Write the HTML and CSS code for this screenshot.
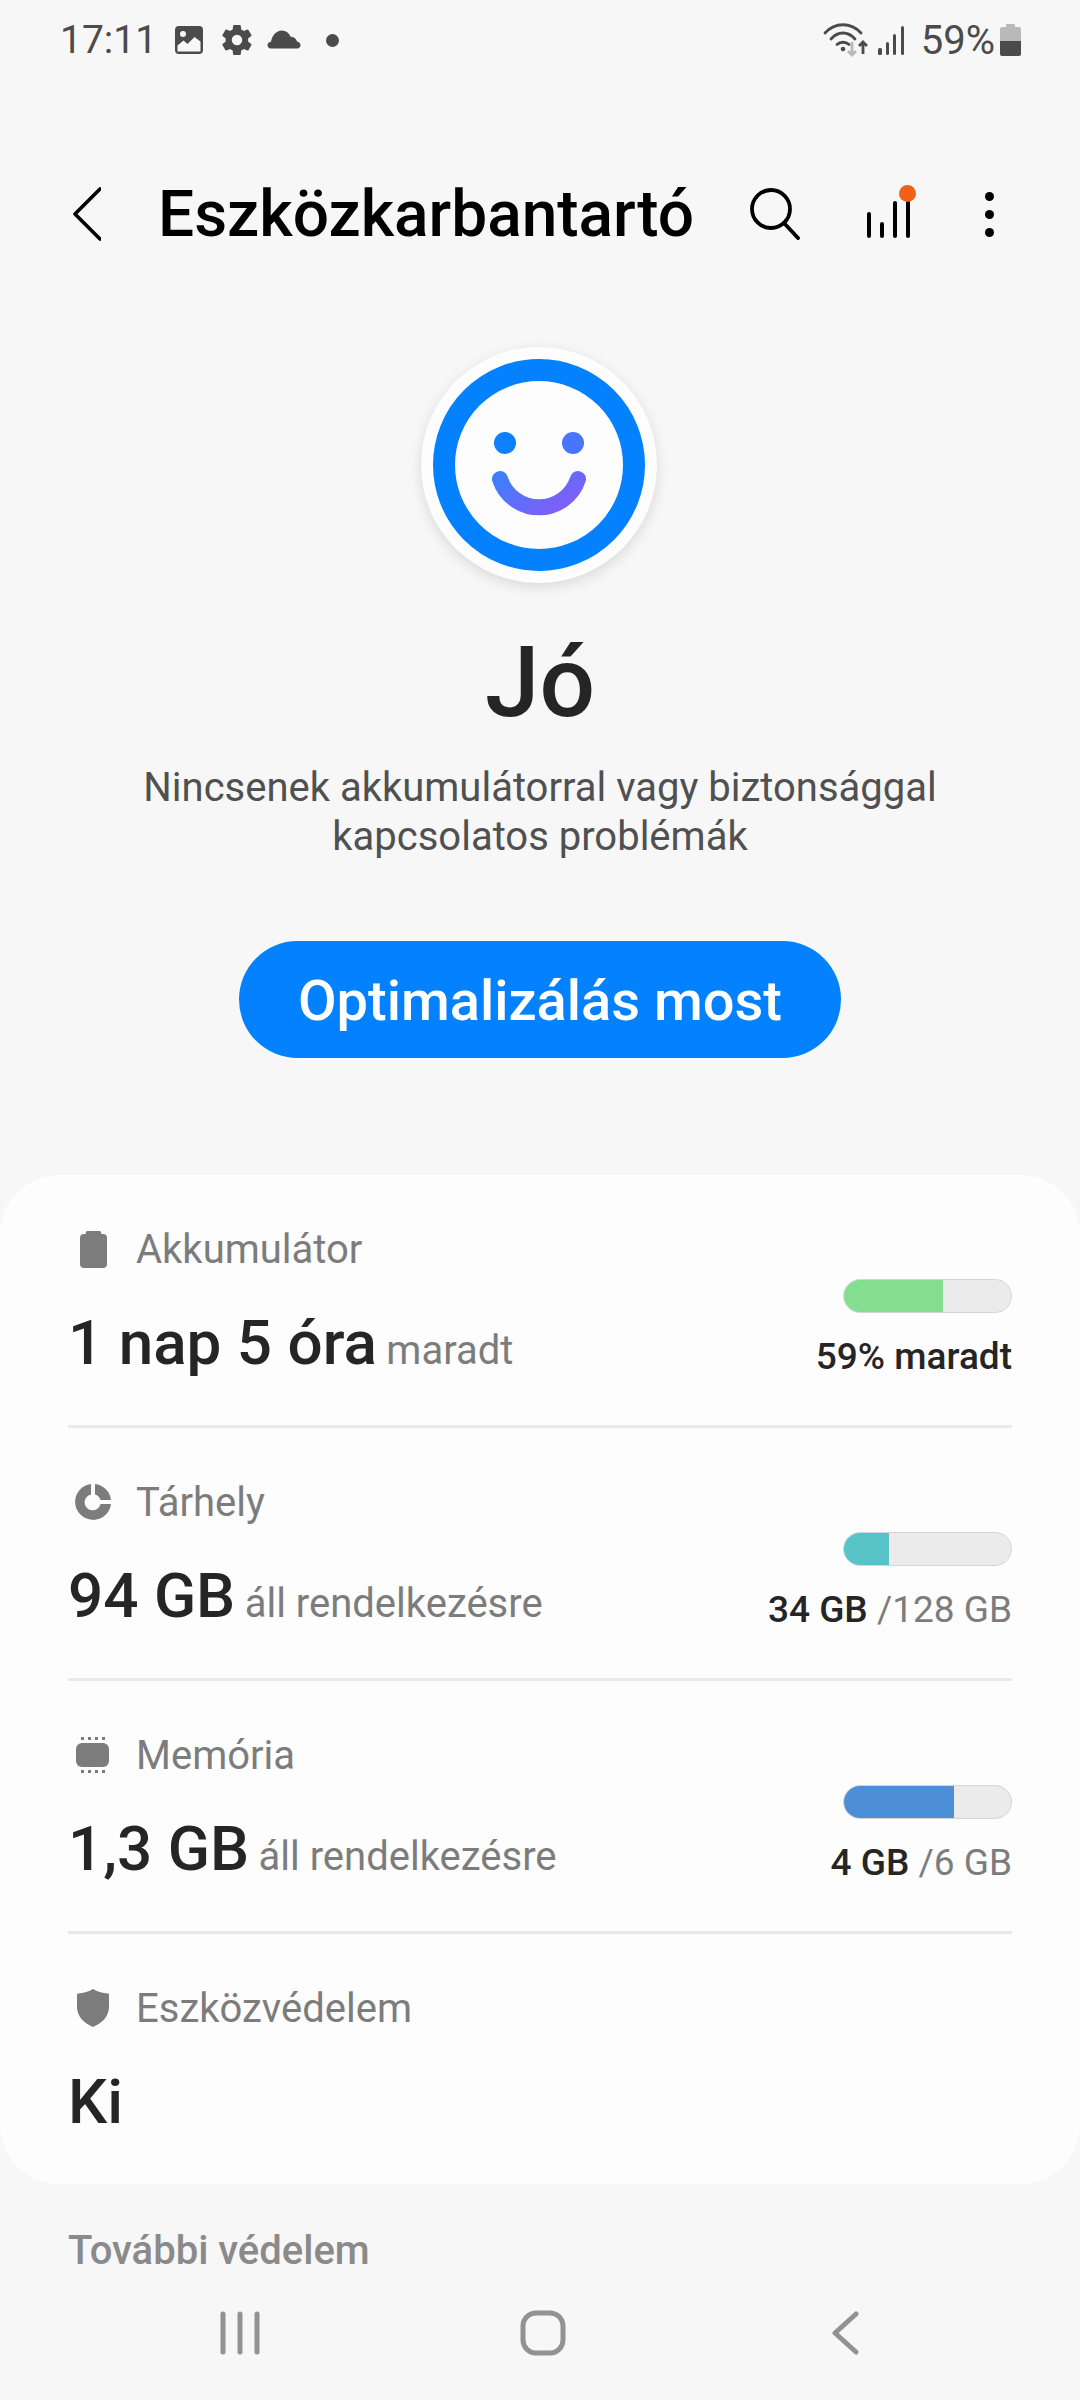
FILE: index.html

```html
<!DOCTYPE html>
<html lang="hu">
<head>
  <meta charset="UTF-8">
  <title>Eszközkarbantartó</title>
  <link rel="stylesheet" href="styles.css">
</head>
<body>
  <div class="app">
    <!-- status bar -->
    <div class="statusbar">
      <div class="status-left">
        <span class="time">17:11</span>
        <svg class="st-icon" width="30" height="30" viewBox="0 0 30 30">
          <rect x="1" y="1" width="28" height="28" rx="4" fill="#4b4b4b"/>
          <path d="M3.500 26.500v-6l6-5 4 3.500 7-7 6 4.500v10z" fill="#f7f7f7"/>
          <circle cx="9" cy="9" r="3" fill="#f7f7f7"/>
        </svg>
        <svg class="st-gear" width="36" height="36" viewBox="0 0 24 24">
          <path fill="#4b4b4b" fill-rule="evenodd" d="M19.400 13c.04-.32.06-.66.06-1s-.02-.68-.06-1l2.100-1.650c.2-.15.25-.43.12-.64l-2-3.460c-.12-.22-.38-.3-.6-.22l-2.500 1c-.52-.4-1.080-.73-1.690-.98l-.38-2.650C14.400 2.180 14.200 2 13.950 2h-4c-.25 0-.46.180-.49.420l-.38 2.650c-.61.250-1.170.59-1.690.98l-2.500-1c-.23-.09-.490 0-.61.220l-2 3.460c-.13.220-.07.490.12.640L4.500 11c-.04.320-.07.650-.07 1s.03.680.07 1l-2.100 1.650c-.19.150-.25.420-.12.640l2 3.460c.12.220.38.300.61.220l2.500-1c.52.400 1.080.730 1.690.980l.38 2.650c.03.240.24.420.49.420h4c.25 0 .46-.180.49-.420l.38-2.650c.61-.250 1.170-.590 1.690-.980l2.500 1c.22.090.48 0 .6-.220l2-3.460c.13-.220.08-.490-.12-.640zM12 15.500a3.500 3.500 0 1 1 0-7 3.500 3.500 0 0 1 0 7z"/>
        </svg>
        <svg class="st-cloud" width="34" height="22" viewBox="0 0 34 22">
          <path fill="#4b4b4b" d="M4 19.500c-2.200 0-3.500-1.400-3.500-3.200 0-2 1.500-3.400 3.500-3.600C5 6.500 9.500 1.500 14.500 1.500c4.500 0 7.800 2.800 9 6.300 3.500-.3 5.800 2 6.500 4.700 2 .3 3.500 1.600 3.500 3.500 0 2-1.500 3.500-3.500 3.500z"/>
        </svg>
        <span class="st-dot"></span>
      </div>
      <div class="status-right">
        <svg width="46" height="36" viewBox="0 0 46 36">
          <g fill="none" stroke="#4b4b4b" stroke-width="2.800" stroke-linecap="round">
            <path d="M2 11C12 0 28 0 38 11"/>
            <path d="M8 17C15 9 25 9 32 17"/>
            <path d="M14 22.500C17 19.500 23 19.500 26 22.500"/>
          </g>
          <circle cx="20" cy="27" r="2.300" fill="#4b4b4b"/>
          <path d="M29 20v13M25 29l4 4 4-4" fill="none" stroke="#b9b9b9" stroke-width="2.800"/>
          <path d="M40 32V20M36 24l4-4 4 4" fill="none" stroke="#4b4b4b" stroke-width="2.800"/>
        </svg>
        <svg class="st-signal" width="28" height="30" viewBox="0 0 28 30">
          <g fill="#4b4b4b">
            <rect x="1" y="23" width="4" height="7" rx="1.500"/>
            <rect x="9" y="17" width="3" height="13" rx="1.500"/>
            <rect x="16" y="9" width="3" height="21" rx="1.500"/>
            <rect x="24" y="1" width="3" height="29" rx="1.500"/>
          </g>
        </svg>
        <span class="battery-text">59%</span>
        <svg width="21" height="32" viewBox="0 0 21 32">
          <path d="M6 0h9v3h4a2 2 0 0 1 2 2v12H0V5a2 2 0 0 1 2-2h4z" fill="#b9b9b9"/>
          <path d="M0 17h21v13a2 2 0 0 1-2 2H2a2 2 0 0 1-2-2z" fill="#4b4b4b"/>
        </svg>
      </div>
    </div>

    <!-- header -->
    <div class="header">
      <svg class="back" width="28" height="54" viewBox="0 0 28 54">
        <path d="M27 2 2 27l25 25" fill="none" stroke="#000" stroke-width="3.600" stroke-linecap="round" stroke-linejoin="round"/>
      </svg>
      <h1 class="title">Eszközkarbantartó</h1>
      <svg class="search" width="50" height="52" viewBox="0 0 50 52">
        <circle cx="21" cy="21" r="19" fill="none" stroke="#000" stroke-width="3.800"/>
        <path d="M34 35l14 15" fill="none" stroke="#000" stroke-width="3.800" stroke-linecap="round"/>
      </svg>
      <div class="stats-icon">
        <svg width="44" height="40" viewBox="0 0 44 40">
          <g stroke="#000" stroke-width="4" stroke-linecap="round">
            <path d="M2 16v22M15 26v12M28 5v33M41 3v35"/>
          </g>
        </svg>
        <span class="badge"></span>
      </div>
      <div class="more"><span></span><span></span><span></span></div>
    </div>

    <!-- score -->
    <div class="score">
      <div class="smiley">
        <svg width="212" height="212" viewBox="0 0 212 212">
          <defs>
            <linearGradient id="smile" x1="0" y1="0" x2="1" y2="0.600">
              <stop offset="0" stop-color="#3f7dfb"/>
              <stop offset="1" stop-color="#7d5ffa"/>
            </linearGradient>
          </defs>
          <circle cx="106" cy="106" r="95" fill="#fdfdfd" stroke="#0381fe" stroke-width="22"/>
          <circle cx="72" cy="84" r="11" fill="#0c80fe"/>
          <circle cx="140" cy="84" r="11" fill="#4875fc"/>
          <path d="M67 120A41 41 0 0 0 145 120" fill="none" stroke="url(#smile)" stroke-width="16" stroke-linecap="round"/>
        </svg>
      </div>
      <div class="score-title">Jó</div>
      <p class="score-text">Nincsenek akkumulátorral vagy biztonsággal<br>kapcsolatos problémák</p>
      <button class="optimize">Optimalizálás most</button>
    </div>

    <!-- card -->
    <div class="card">
      <div class="row">
        <div class="row-main">
          <div class="label">
            <span class="label-icon">
              <svg width="27" height="37" viewBox="0 0 27 37">
                <path d="M8 0h11a2 2 0 0 1 2 3h2a4 4 0 0 1 4 4v26a4 4 0 0 1-4 4H4a4 4 0 0 1-4-4V7a4 4 0 0 1 4-4h2a2 2 0 0 1 2-3z" fill="#7c7c7c"/>
              </svg>
            </span>
            Akkumulátor
          </div>
          <div class="value">1 nap 5 óra <small>maradt</small></div>
        </div>
        <div class="row-side">
          <div class="bar"><div class="fill fill-green"></div></div>
          <div class="side-text">59% maradt</div>
        </div>
      </div>

      <div class="row">
        <div class="row-main">
          <div class="label">
            <span class="label-icon">
              <svg width="36" height="36" viewBox="0 0 36 36">
                <path fill="#7c7c7c" fill-rule="evenodd" d="M16 0v10.500A8 8 0 1 0 25.500 20H36A18 18 0 1 1 16 0z"/>
                <path fill="#7c7c7c" d="M20 0a18 18 0 0 1 16 16H25.500A8 8 0 0 0 20 10.500z"/>
              </svg>
            </span>
            Tárhely
          </div>
          <div class="value">94 GB <small>áll rendelkezésre</small></div>
        </div>
        <div class="row-side">
          <div class="bar"><div class="fill fill-teal"></div></div>
          <div class="side-text">34 GB <small>/128 GB</small></div>
        </div>
      </div>

      <div class="row">
        <div class="row-main">
          <div class="label">
            <span class="label-icon">
              <svg width="34" height="36" viewBox="0 0 34 36">
                <rect x="0" y="6" width="33" height="24" rx="6" fill="#7c7c7c"/>
                <g fill="#7c7c7c">
                  <rect x="5" y="0" width="3" height="3"/><rect x="12" y="0" width="3" height="3"/><rect x="19" y="0" width="3" height="3"/><rect x="26" y="0" width="3" height="3"/>
                  <rect x="5" y="33" width="3" height="3"/><rect x="12" y="33" width="3" height="3"/><rect x="19" y="33" width="3" height="3"/><rect x="26" y="33" width="3" height="3"/>
                </g>
              </svg>
            </span>
            Memória
          </div>
          <div class="value">1,3 GB <small>áll rendelkezésre</small></div>
        </div>
        <div class="row-side">
          <div class="bar"><div class="fill fill-blue"></div></div>
          <div class="side-text">4 GB <small>/6 GB</small></div>
        </div>
      </div>

      <div class="row row-last">
        <div class="row-main">
          <div class="label">
            <span class="label-icon">
              <svg width="32" height="38" viewBox="0 0 32 38">
                <path fill="#7c7c7c" d="M16 0c4 2.500 9 4 15 4.500.6 0 1 .5 1 1V18c0 9-6.500 16-16 20C6.500 34 0 27 0 18V5.500c0-.5.4-1 1-1C7 4 12 2.500 16 0z"/>
              </svg>
            </span>
            Eszközvédelem
          </div>
          <div class="value">Ki</div>
        </div>
      </div>
    </div>

    <div class="section-title">További védelem</div>

    <!-- navigation bar -->
    <div class="navbar">
      <svg width="42" height="44" viewBox="0 0 42 44">
        <g stroke="#929292" stroke-width="5" stroke-linecap="round">
          <path d="M4 3v38M21 3v38M38 3v38"/>
        </g>
      </svg>
      <svg width="46" height="46" viewBox="0 0 46 46">
        <rect x="3" y="3" width="40" height="40" rx="13" fill="none" stroke="#929292" stroke-width="5"/>
      </svg>
      <svg width="28" height="44" viewBox="0 0 28 44">
        <path d="M24 3 3 22l21 19" fill="none" stroke="#929292" stroke-width="5" stroke-linecap="round" stroke-linejoin="round"/>
      </svg>
    </div>
  </div>
</body>
</html>
```

FILE: styles.css

```css
* {
  box-sizing: border-box;
}

body {
  margin: 0;
  background-color: #f7f7f7;
  font-family: Roboto, "Liberation Sans", sans-serif;
}

.app {
  width: 1080px;
  height: 2400px;
  overflow: hidden;
  display: flex;
  flex-direction: column;
  position: relative;
}

/* status bar */
.statusbar {
  height: 80px;
  padding: 0 59px 0 60px;
  display: flex;
  justify-content: space-between;
  align-items: center;
  color: #4b4b4b;
}

.status-left,
.status-right {
  display: flex;
  align-items: center;
}

.time {
  font-size: 39px;
  margin-right: 17px;
}

.st-icon {
  margin-right: 15px;
}

.st-gear {
  margin-right: 12px;
}

.st-dot {
  width: 13px;
  height: 13px;
  margin-left: 25px;
  border-radius: 50%;
  background-color: #4b4b4b;
}

.st-signal {
  margin-left: 8px;
}

.battery-text {
  font-size: 40px;
  margin: 0 5px 0 16px;
}

/* header */
.header {
  height: 120px;
  margin-top: 74px;
  padding-left: 73px;
  display: flex;
  align-items: center;
}

.back {
  margin-right: 57px;
}

.title {
  margin: 0;
  font-size: 64px;
  font-weight: 500;
  color: #000;
}

.search {
  margin-left: 56px;
}

.stats-icon {
  position: relative;
  margin: 12px 0 0 67px;
}

.badge {
  position: absolute;
  right: -5px;
  top: -13px;
  width: 17px;
  height: 17px;
  border-radius: 50%;
  background-color: #f06218;
}

.more {
  display: flex;
  flex-direction: column;
  gap: 9px;
  margin-left: 74px;
}

.more span {
  width: 9px;
  height: 9px;
  border-radius: 50%;
  background-color: #000;
}

/* score */
.score {
  display: flex;
  flex-direction: column;
  align-items: center;
}

.smiley {
  width: 236px;
  height: 236px;
  margin: 73px 2px 0 0;
  border-radius: 50%;
  background-color: #fdfdfd;
  box-shadow: 0 4px 14px rgba(0, 0, 0, 0.12);
  display: flex;
  align-items: center;
  justify-content: center;
}

.score-title {
  margin-top: 50px;
  font-size: 98px;
  line-height: 100px;
  font-weight: 500;
  color: #252525;
}

.score-text {
  margin: 30px 0 0;
  font-size: 40px;
  line-height: 49px;
  text-align: center;
  color: #505050;
}

.optimize {
  margin-top: 80px;
  width: 602px;
  height: 117px;
  padding-top: 3px;
  border: none;
  border-radius: 59px;
  background-color: #0381fe;
  color: #fff;
  font-family: inherit;
  font-size: 56px;
  font-weight: 500;
}

/* card */
.card {
  margin-top: 117px;
  height: 1009px;
  padding: 0 68px;
  border-radius: 60px;
  background-color: #fdfdfd;
}

.row {
  height: 253px;
  display: flex;
  justify-content: space-between;
  border-bottom: 3px solid #e9e9e9;
}

.row-last {
  border-bottom: none;
}

.label {
  margin-top: 51px;
  height: 46px;
  display: flex;
  align-items: center;
  font-size: 40px;
  color: #7c7c7c;
}

.label-icon {
  width: 50px;
  margin-right: 18px;
  display: flex;
  justify-content: center;
}

.value {
  margin-top: 36px;
  font-size: 62px;
  line-height: 70px;
  font-weight: 500;
  color: #252525;
}

.value small {
  margin-left: -6px;
  font-size: 40px;
  font-weight: 400;
  color: #7c7c7c;
}

.row-side {
  width: 300px;
  padding-top: 104px;
  display: flex;
  flex-direction: column;
  align-items: flex-end;
}

.bar {
  width: 169px;
  height: 34px;
  border: 1px solid #d6d6d6;
  border-radius: 17px;
  background-color: #ebebeb;
  overflow: hidden;
}

.fill {
  height: 100%;
}

.fill-green {
  width: 59%;
  background-color: #84de90;
}

.fill-teal {
  width: 27%;
  background-color: #56c4c6;
}

.fill-blue {
  width: 66%;
  background-color: #4c8fd6;
}

.side-text {
  margin-top: 22px;
  font-size: 37px;
  line-height: 44px;
  font-weight: 500;
  color: #252525;
  white-space: nowrap;
}

.side-text small {
  font-size: 37px;
  font-weight: 400;
  color: #7c7c7c;
}

.section-title {
  margin: 45px 0 0 68px;
  font-size: 40px;
  line-height: 44px;
  font-weight: 500;
  color: #8a8a8a;
}

/* navigation bar */
.navbar {
  position: absolute;
  left: 0;
  right: 0;
  top: 2310px;
  height: 46px;
  padding-left: 6px;
  display: grid;
  grid-template-columns: 303px 303px 303px;
  justify-content: center;
  justify-items: center;
  align-items: center;
  background-color: #f7f7f7;
}
```
